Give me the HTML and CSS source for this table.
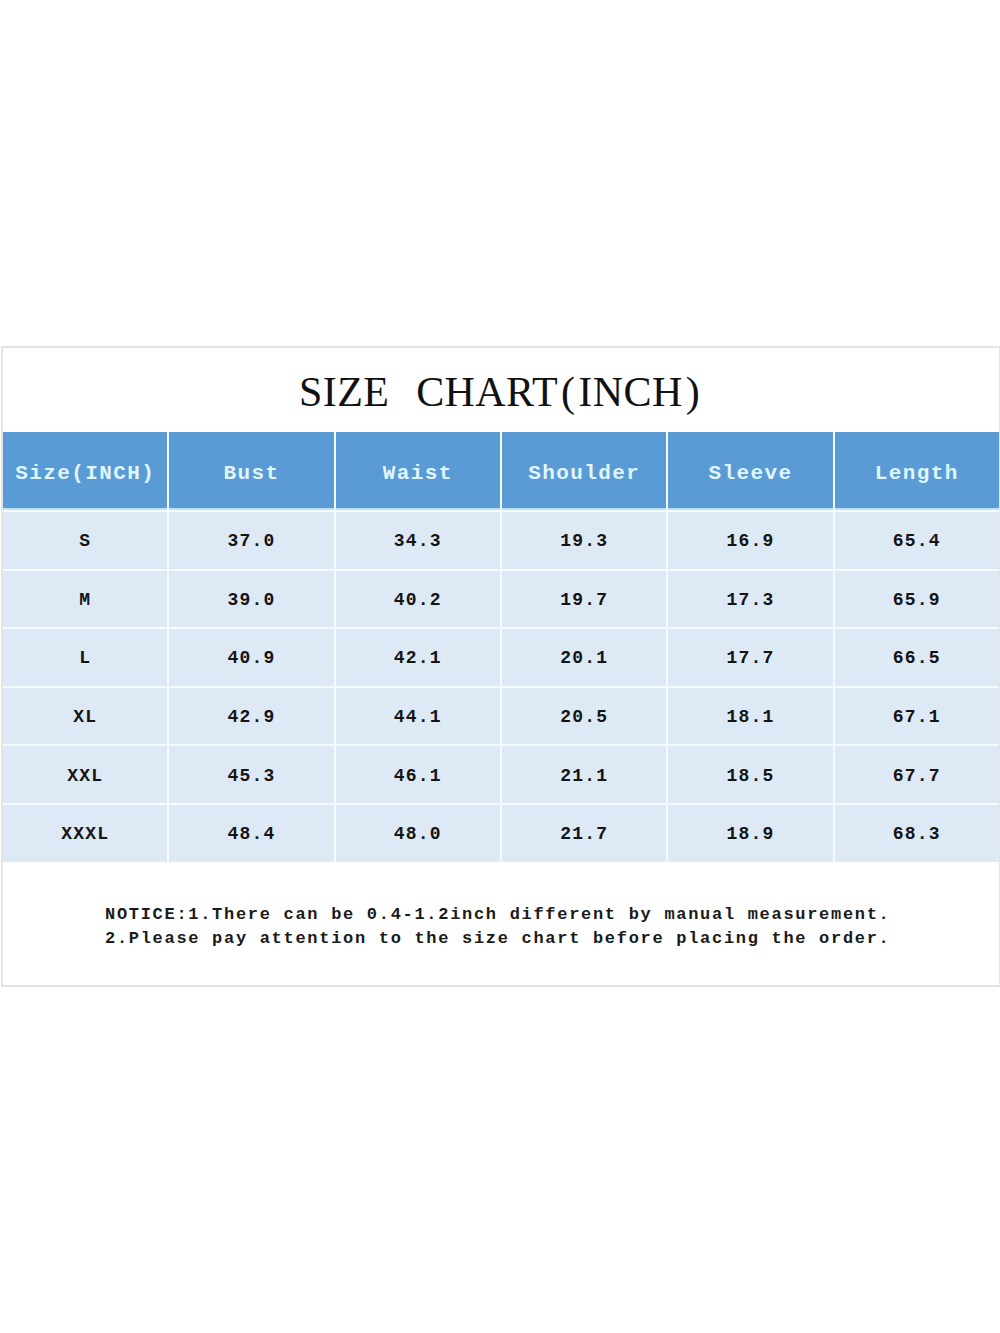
FILE: index.html
```html
<!DOCTYPE html>
<html>
<head>
<meta charset="utf-8">
<link rel="stylesheet" href="styles.css">
</head>
<body>
<div class="chart">
  <div class="title">SIZE CHART<span class="paren">(</span>INCH<span class="paren">)</span></div>
  <div class="grid">
    <div class="cell head">Size(INCH)</div>
    <div class="cell head">Bust</div>
    <div class="cell head">Waist</div>
    <div class="cell head">Shoulder</div>
    <div class="cell head">Sleeve</div>
    <div class="cell head">Length</div>

    <div class="cell">S</div><div class="cell">37.0</div><div class="cell">34.3</div><div class="cell">19.3</div><div class="cell">16.9</div><div class="cell">65.4</div>
    <div class="cell">M</div><div class="cell">39.0</div><div class="cell">40.2</div><div class="cell">19.7</div><div class="cell">17.3</div><div class="cell">65.9</div>
    <div class="cell">L</div><div class="cell">40.9</div><div class="cell">42.1</div><div class="cell">20.1</div><div class="cell">17.7</div><div class="cell">66.5</div>
    <div class="cell">XL</div><div class="cell">42.9</div><div class="cell">44.1</div><div class="cell">20.5</div><div class="cell">18.1</div><div class="cell">67.1</div>
    <div class="cell">XXL</div><div class="cell">45.3</div><div class="cell">46.1</div><div class="cell">21.1</div><div class="cell">18.5</div><div class="cell">67.7</div>
    <div class="cell">XXXL</div><div class="cell">48.4</div><div class="cell">48.0</div><div class="cell">21.7</div><div class="cell">18.9</div><div class="cell">68.3</div>
  </div>
  <div class="notice">
    <p>NOTICE:1.There can be 0.4-1.2inch different by manual measurement.</p>
    <p>2.Please pay attention to the size chart before placing the order.</p>
  </div>
</div>
</body>
</html>
```
FILE: styles.css
```css
html, body {
  margin: 0;
  padding: 0;
  background: #ffffff;
}
body {
  padding-top: 346px;
}
.chart {
  width: 996px;
  margin-left: 1px;
  border: 2px solid #e4e4e4;
  background: #fff;
}
.title {
  height: 84px;
  display: flex;
  align-items: center;
  justify-content: center;
  padding-top: 4px;
  padding-left: 0;
  box-sizing: border-box;
  font-family: "Liberation Serif", serif;
  font-size: 42px;
  letter-spacing: 0.4px;
  word-spacing: 16px;
  color: #111;
}
.title .paren {
  margin: 0 3px;
}
.grid {
  display: grid;
  grid-template-columns: repeat(6, 1fr);
  grid-template-rows: 78px;
  grid-auto-rows: 56.6px;
  column-gap: 2px;
  row-gap: 2px;
  background: #f4fafd;
}
.cell {
  display: flex;
  align-items: center;
  justify-content: center;
  padding-top: 2px;
  box-sizing: border-box;
  background: #dde9f5;
  font-family: "Liberation Mono", monospace;
  font-weight: bold;
  font-size: 18px;
  letter-spacing: 1.2px;
  color: #141414;
}
.cell.head {
  background: #5b9bd5;
  color: #dff6ff;
  font-size: 21px;
  letter-spacing: 1.4px;
  padding-top: 6px;
  border-bottom: 2px solid #b9e3f6;
}
.notice {
  height: 123px;
  display: flex;
  flex-direction: column;
  justify-content: center;
  padding-left: 102px;
  padding-top: 8px;
  box-sizing: border-box;
  font-family: "Liberation Mono", monospace;
  font-weight: bold;
  font-size: 17px;
  letter-spacing: 1.7px;
  color: #1a1a1a;
  line-height: 24px;
}
.notice p {
  margin: 0;
}
```
